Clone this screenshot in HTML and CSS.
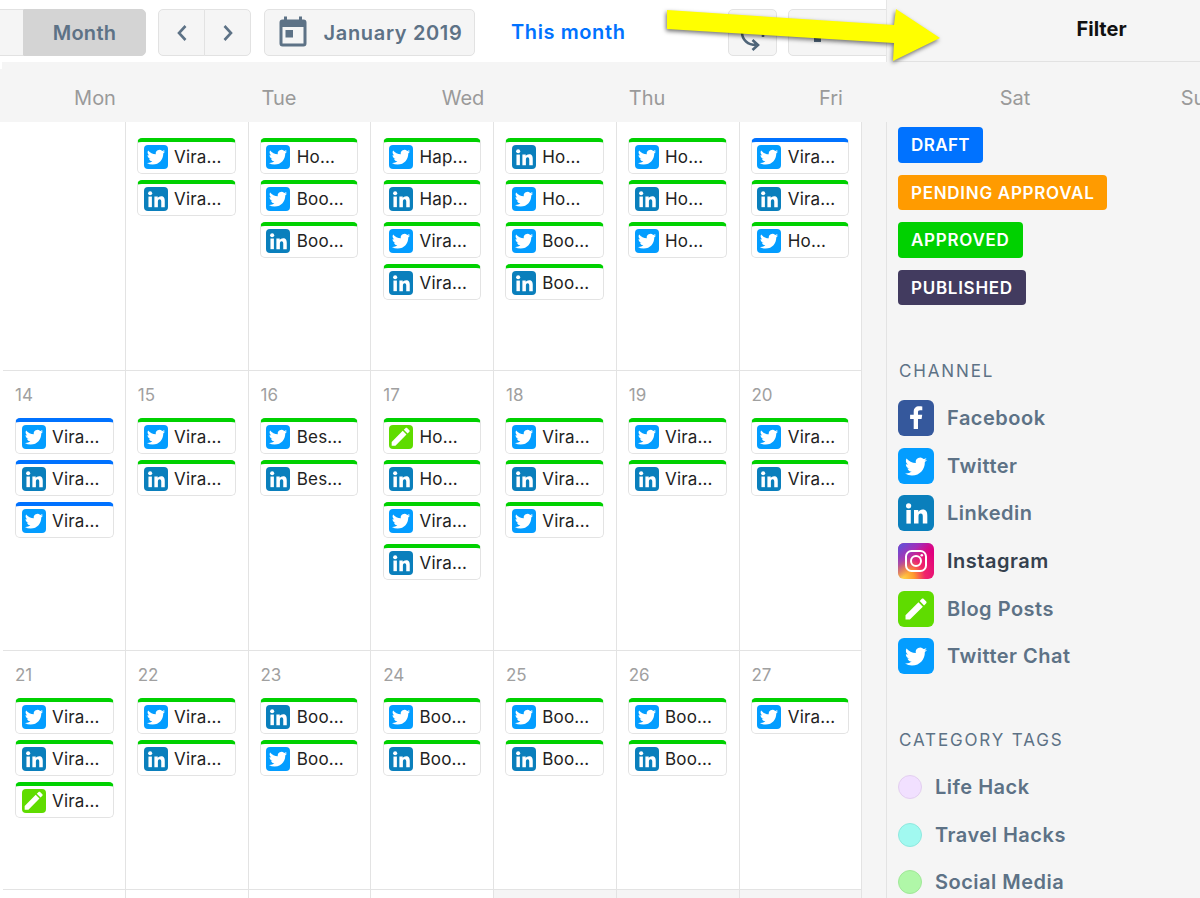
FILE: index.html
```html
<!DOCTYPE html>
<html lang="en">
<head>
<meta charset="utf-8">
<title>Calendar</title>
<link rel="stylesheet" href="styles.css">
</head>
<body>
<svg class="defs" width="0" height="0" aria-hidden="true">
  <defs>
    <radialGradient id="igwarm" cx="0.12" cy="1" r="1.1">
      <stop offset="0" stop-color="#ffd84a"/>
      <stop offset="0.3" stop-color="#ff9a2e"/>
      <stop offset="0.58" stop-color="#f0246a"/>
      <stop offset="1" stop-color="#e0007f"/>
    </radialGradient>
    <linearGradient id="igcool" x1="0" y1="0" x2="0.55" y2="0.6">
      <stop offset="0" stop-color="#4f5be0"/>
      <stop offset="0.55" stop-color="#8a3cd0" stop-opacity="0.7"/>
      <stop offset="1" stop-color="#c0209a" stop-opacity="0"/>
    </linearGradient>
    <path id="bird" fill="#fff" d="M23.953 4.57a10 10 0 01-2.825.775 4.958 4.958 0 002.163-2.723c-.951.555-2.005.959-3.127 1.184a4.92 4.92 0 00-8.384 4.482C7.69 8.095 4.067 6.13 1.64 3.162a4.822 4.822 0 00-.666 2.475c0 1.71.87 3.213 2.188 4.096a4.904 4.904 0 01-2.228-.616v.06a4.923 4.923 0 003.946 4.827 4.996 4.996 0 01-2.212.085 4.936 4.936 0 004.604 3.417 9.867 9.867 0 01-6.102 2.105c-.39 0-.779-.023-1.17-.067a13.995 13.995 0 007.557 2.209c9.053 0 13.998-7.496 13.998-13.985 0-.21 0-.42-.015-.63A9.935 9.935 0 0024 4.59z"/>
    <g id="inmark" fill="#fff">
      <circle cx="10.600" cy="10.800" r="2.600"/>
      <rect x="8.400" y="15" width="4.400" height="13.600"/>
      <path d="M16 15h4.300v2c.8-1.400 2.400-2.400 4.300-2.400 3.700 0 4.700 2.400 4.700 5.800v8.200h-4.500v-7.200c0-1.800-.5-3-2.100-3-1.700 0-2.200 1.300-2.200 3v7.200H16z"/>
    </g>
    <path id="pencil" fill="#fff" d="M3 17.250V21h3.750L17.810 9.940l-3.750-3.750L3 17.250zM20.710 7.040c.39-.39.39-1.020 0-1.410l-2.340-2.340c-.39-.39-1.020-.39-1.410 0l-1.830 1.830 3.750 3.750 1.830-1.830z"/>
    <symbol id="tw" viewBox="0 0 36 36">
      <rect width="36" height="36" rx="6" fill="#039dff"/>
      <use href="#bird" transform="translate(4.300 4.600) scale(1.140)"/>
    </symbol>
    <symbol id="tw-lg" viewBox="0 0 36 36">
      <rect width="36" height="36" rx="6" fill="#039dff"/>
      <use href="#bird" transform="translate(7 7.500) scale(.92)"/>
    </symbol>
    <symbol id="li" viewBox="0 0 36 36">
      <rect width="36" height="36" rx="6" fill="#0a7fbc"/>
      <use href="#inmark" transform="translate(18.500 19) scale(1.170) translate(-18.500 -19)"/>
    </symbol>
    <symbol id="li-lg" viewBox="0 0 36 36">
      <rect width="36" height="36" rx="6" fill="#0a7fbc"/>
      <use href="#inmark"/>
    </symbol>
    <symbol id="fb" viewBox="0 0 36 36">
      <rect width="36" height="36" rx="6" fill="#35589c"/>
      <path fill="#fff" d="M20 29V19h3.600l.6-4.200H20v-2.500c0-1.200.4-2 2.100-2h2.200V6.500c-.4-.1-1.700-.2-3.200-.2-3.200 0-5.400 1.900-5.400 5.500v3h-3.600V19h3.600v10z"/>
    </symbol>
    <symbol id="ig" viewBox="0 0 36 36">
      <rect width="36" height="36" rx="6" fill="url(#igwarm)"/>
      <rect width="36" height="36" rx="6" fill="url(#igcool)"/>
      <rect x="8" y="8" width="20" height="20" rx="5.500" fill="none" stroke="#fff" stroke-width="2"/>
      <circle cx="18" cy="18" r="5" fill="none" stroke="#fff" stroke-width="2"/>
      <circle cx="23.800" cy="12.200" r="1.300" fill="#fff"/>
    </symbol>
    <symbol id="pen" viewBox="0 0 36 36">
      <rect width="36" height="36" rx="6" fill="#5fdc00"/>
      <use href="#pencil" transform="translate(-.500 -.500) scale(1.500)"/>
    </symbol>
    <symbol id="pen-lg" viewBox="0 0 36 36">
      <rect width="36" height="36" rx="6" fill="#5fdc00"/>
      <use href="#pencil" transform="translate(4 4) scale(1.170)"/>
    </symbol>
  </defs>
</svg>

<div class="page">
  <header class="top">
    <div class="toolbar">
      <div class="btn-group views">
        <span class="btn seg-light"></span>
        <span class="btn seg-active">Month</span>
      </div>
      <div class="btn-group nav">
        <span class="btn nav-btn">
          <svg class="chev" viewBox="0 0 12 20"><path d="M9.500 3L3 10l6.500 7"/></svg>
        </span>
        <span class="btn nav-btn">
          <svg class="chev" viewBox="0 0 12 20"><path d="M2.500 3L9 10l-6.500 7"/></svg>
        </span>
      </div>
      <span class="btn date-btn">
        <svg class="cal" viewBox="0 0 24 24"><path d="M19 3h-1V1h-2v2H8V1H6v2H5a2 2 0 00-2 2v14a2 2 0 002 2h14a2 2 0 002-2V5a2 2 0 00-2-2zm0 16H5V8h14zM7 10h5v5H7z"/></svg>
        January 2019
      </span>
      <a class="this-month">This month</a>
      <span class="btn refresh-btn">
        <svg class="refresh" viewBox="0 0 30 30"><path d="M4 8C4 16 10 21 18 21M14.500 16l5.500 5-5.500 5M25 10v3"/></svg>
      </span>
      <span class="btn more-btn"><i class="more-dot"></i></span>
    </div>
    <div class="filter-head"><div class="filter-title">Filter</div></div>
  </header>

  <div class="dayhead">
    <span>Mon</span><span>Tue</span><span>Wed</span><span>Thu</span><span>Fri</span><span>Sat</span><span>Sun</span>
  </div>

  <div class="body">
    <main class="calendar">
      <div class="grid">
        <div class="cell r1"></div>
        <div class="cell r1">
          <div class="post"><svg class="ic"><use href="#tw"/></svg><span>Vira...</span></div>
          <div class="post"><svg class="ic"><use href="#li"/></svg><span>Vira...</span></div>
        </div>
        <div class="cell r1">
          <div class="post"><svg class="ic"><use href="#tw"/></svg><span>Ho...</span></div>
          <div class="post"><svg class="ic"><use href="#tw"/></svg><span>Boo...</span></div>
          <div class="post"><svg class="ic"><use href="#li"/></svg><span>Boo...</span></div>
        </div>
        <div class="cell r1">
          <div class="post"><svg class="ic"><use href="#tw"/></svg><span>Hap...</span></div>
          <div class="post"><svg class="ic"><use href="#li"/></svg><span>Hap...</span></div>
          <div class="post"><svg class="ic"><use href="#tw"/></svg><span>Vira...</span></div>
          <div class="post"><svg class="ic"><use href="#li"/></svg><span>Vira...</span></div>
        </div>
        <div class="cell r1">
          <div class="post"><svg class="ic"><use href="#li"/></svg><span>Ho...</span></div>
          <div class="post"><svg class="ic"><use href="#tw"/></svg><span>Ho...</span></div>
          <div class="post"><svg class="ic"><use href="#tw"/></svg><span>Boo...</span></div>
          <div class="post"><svg class="ic"><use href="#li"/></svg><span>Boo...</span></div>
        </div>
        <div class="cell r1">
          <div class="post"><svg class="ic"><use href="#tw"/></svg><span>Ho...</span></div>
          <div class="post"><svg class="ic"><use href="#li"/></svg><span>Ho...</span></div>
          <div class="post"><svg class="ic"><use href="#tw"/></svg><span>Ho...</span></div>
        </div>
        <div class="cell r1">
          <div class="post draft"><svg class="ic"><use href="#tw"/></svg><span>Vira...</span></div>
          <div class="post"><svg class="ic"><use href="#li"/></svg><span>Vira...</span></div>
          <div class="post"><svg class="ic"><use href="#tw"/></svg><span>Ho...</span></div>
        </div>

        <div class="cell r2"><div class="date">14</div>
          <div class="post draft"><svg class="ic"><use href="#tw"/></svg><span>Vira...</span></div>
          <div class="post draft"><svg class="ic"><use href="#li"/></svg><span>Vira...</span></div>
          <div class="post draft"><svg class="ic"><use href="#tw"/></svg><span>Vira...</span></div>
        </div>
        <div class="cell r2"><div class="date">15</div>
          <div class="post"><svg class="ic"><use href="#tw"/></svg><span>Vira...</span></div>
          <div class="post"><svg class="ic"><use href="#li"/></svg><span>Vira...</span></div>
        </div>
        <div class="cell r2"><div class="date">16</div>
          <div class="post"><svg class="ic"><use href="#tw"/></svg><span>Bes...</span></div>
          <div class="post"><svg class="ic"><use href="#li"/></svg><span>Bes...</span></div>
        </div>
        <div class="cell r2"><div class="date">17</div>
          <div class="post"><svg class="ic"><use href="#pen"/></svg><span>Ho...</span></div>
          <div class="post"><svg class="ic"><use href="#li"/></svg><span>Ho...</span></div>
          <div class="post"><svg class="ic"><use href="#tw"/></svg><span>Vira...</span></div>
          <div class="post"><svg class="ic"><use href="#li"/></svg><span>Vira...</span></div>
        </div>
        <div class="cell r2"><div class="date">18</div>
          <div class="post"><svg class="ic"><use href="#tw"/></svg><span>Vira...</span></div>
          <div class="post"><svg class="ic"><use href="#li"/></svg><span>Vira...</span></div>
          <div class="post"><svg class="ic"><use href="#tw"/></svg><span>Vira...</span></div>
        </div>
        <div class="cell r2"><div class="date">19</div>
          <div class="post"><svg class="ic"><use href="#tw"/></svg><span>Vira...</span></div>
          <div class="post"><svg class="ic"><use href="#li"/></svg><span>Vira...</span></div>
        </div>
        <div class="cell r2"><div class="date">20</div>
          <div class="post"><svg class="ic"><use href="#tw"/></svg><span>Vira...</span></div>
          <div class="post"><svg class="ic"><use href="#li"/></svg><span>Vira...</span></div>
        </div>

        <div class="cell r3"><div class="date">21</div>
          <div class="post"><svg class="ic"><use href="#tw"/></svg><span>Vira...</span></div>
          <div class="post"><svg class="ic"><use href="#li"/></svg><span>Vira...</span></div>
          <div class="post"><svg class="ic"><use href="#pen"/></svg><span>Vira...</span></div>
        </div>
        <div class="cell r3"><div class="date">22</div>
          <div class="post"><svg class="ic"><use href="#tw"/></svg><span>Vira...</span></div>
          <div class="post"><svg class="ic"><use href="#li"/></svg><span>Vira...</span></div>
        </div>
        <div class="cell r3"><div class="date">23</div>
          <div class="post"><svg class="ic"><use href="#li"/></svg><span>Boo...</span></div>
          <div class="post"><svg class="ic"><use href="#tw"/></svg><span>Boo...</span></div>
        </div>
        <div class="cell r3"><div class="date">24</div>
          <div class="post"><svg class="ic"><use href="#tw"/></svg><span>Boo...</span></div>
          <div class="post"><svg class="ic"><use href="#li"/></svg><span>Boo...</span></div>
        </div>
        <div class="cell r3"><div class="date">25</div>
          <div class="post"><svg class="ic"><use href="#tw"/></svg><span>Boo...</span></div>
          <div class="post"><svg class="ic"><use href="#li"/></svg><span>Boo...</span></div>
        </div>
        <div class="cell r3"><div class="date">26</div>
          <div class="post"><svg class="ic"><use href="#tw"/></svg><span>Boo...</span></div>
          <div class="post"><svg class="ic"><use href="#li"/></svg><span>Boo...</span></div>
        </div>
        <div class="cell r3"><div class="date">27</div>
          <div class="post"><svg class="ic"><use href="#tw"/></svg><span>Vira...</span></div>
        </div>

        <div class="cell r4"></div>
        <div class="cell r4"></div>
        <div class="cell r4"></div>
        <div class="cell r4"></div>
        <div class="cell r4 off"></div>
        <div class="cell r4 off"></div>
        <div class="cell r4 off"></div>
      </div>
    </main>

    <aside class="panel">
      <div class="badges">
        <span class="badge b-draft">DRAFT</span>
        <span class="badge b-pending">PENDING APPROVAL</span>
        <span class="badge b-approved">APPROVED</span>
        <span class="badge b-published">PUBLISHED</span>
      </div>
      <h2 class="label channel-label">CHANNEL</h2>
      <ul class="channels">
        <li><svg class="ic-lg"><use href="#fb"/></svg>Facebook</li>
        <li><svg class="ic-lg"><use href="#tw-lg"/></svg>Twitter</li>
        <li><svg class="ic-lg"><use href="#li-lg"/></svg>Linkedin</li>
        <li class="hover"><svg class="ic-lg"><use href="#ig"/></svg>Instagram</li>
        <li><svg class="ic-lg"><use href="#pen-lg"/></svg>Blog Posts</li>
        <li><svg class="ic-lg"><use href="#tw-lg"/></svg>Twitter Chat</li>
      </ul>
      <h2 class="label tags-label">CATEGORY TAGS</h2>
      <ul class="tags">
        <li><i class="dot d-life"></i>Life Hack</li>
        <li><i class="dot d-travel"></i>Travel Hacks</li>
        <li><i class="dot d-social"></i>Social Media</li>
      </ul>
    </aside>
  </div>

  <svg class="arrow" viewBox="0 0 290 60" width="290" height="60" aria-hidden="true">
    <polygon points="2,1 229,16 231,0 275,29 228,52 229,34 2,20" fill="#ffff00"/>
  </svg>
</div>
</body>
</html>
```
FILE: styles.css
```css
* { box-sizing: border-box; }
html, body { margin: 0; padding: 0; height: 100%; }
body {
  font-family: "Inter", "Liberation Sans", sans-serif;
  background: #fff;
  overflow: hidden;
}
.defs { position: absolute; }
.page {
  position: relative;
  width: 1200px;
  height: 898px;
  overflow: hidden;
  display: flex;
  flex-direction: column;
}

/* top row */
.top { display: flex; height: 62px; flex: none; }
.toolbar {
  width: 886px;
  flex: none;
  display: flex;
  align-items: flex-start;
  padding-top: 9px;
  overflow: hidden;
  background: #fff;
}
.btn {
  display: flex;
  align-items: center;
  justify-content: center;
  height: 47px;
  flex: none;
  background: #f5f5f5;
  border: 1px solid #e2e2e2;
  border-radius: 5px;
  color: #5d7286;
  font-size: 20px;
  font-weight: 600;
  letter-spacing: .3px;
}
.btn-group { display: flex; flex: none; }
.views { margin-left: -40px; }
.seg-light { width: 63px; border-radius: 5px 0 0 5px; border-right: 0; }
.seg-active {
  width: 123px;
  background: #d4d4d4;
  border-radius: 0 5px 5px 0;
  border-color: #d4d4d4;
}
.nav { margin-left: 12px; }
.nav-btn { width: 47px; border-radius: 5px 0 0 5px; }
.nav-btn + .nav-btn { margin-left: -1px; border-radius: 0 5px 5px 0; }
.chev { width: 12px; height: 20px; fill: none; stroke: #5d7286; stroke-width: 2.6; }
.date-btn { width: 211px; margin-left: 13px; gap: 13px; letter-spacing: .65px; }
.cal { width: 36px; height: 36px; fill: #5d7286; margin-left: -2px; }
.this-month {
  margin-left: 36px;
  line-height: 47px;
  color: #0072ff;
  font-size: 20px;
  font-weight: 600;
  letter-spacing: .6px;
  flex: none;
  width: 217px;
}
.refresh-btn { width: 49px; }
.refresh { width: 30px; height: 30px; fill: none; stroke: #4f6579; stroke-width: 2.6; margin-top: 13px; }
.more-btn { width: 140px; margin-left: 11px; justify-content: flex-start; padding-left: 25px; }
.more-dot { display: block; width: 7px; height: 5px; background: #4f6579; margin-top: 13px; }

.filter-head {
  flex: 1;
  background: #f5f5f5;
  border-left: 1px solid #e6e6e6;
}
.filter-title {
  height: 62px;
  margin-left: 6px;
  padding-left: 110px;
  display: flex;
  align-items: center;
  justify-content: center;
  border-bottom: 1px solid #e2e2e2;
  color: #111;
  font-size: 20px;
  font-weight: 700;
  padding-bottom: 4px;
}

/* weekday header */
.dayhead {
  flex: none;
  height: 60px;
  background: linear-gradient(#fff, #fff) 0 0 / 2px 7px no-repeat, #f5f5f5;
  display: grid;
  grid-template-columns: repeat(7, 184px);
  padding: 11px 0 0 3px;
  align-items: center;
  color: #9a9a9a;
  font-size: 20px;
  text-align: center;
  overflow: hidden;
}

/* calendar */
.body { flex: 1; display: flex; min-height: 0; }
.calendar { width: 886px; flex: none; background: #f5f5f5; overflow: hidden; }
.grid {
  width: 862px;
  border-left: 3px solid #fff;
  box-shadow: inset 1px 0 0 #e4e4e4;
  display: grid;
  grid-template-columns: repeat(7, 122.75px);
  grid-template-rows: 249px 280px 239px 40px;
}
.cell {
  background: #fff;
  border-right: 1px solid #e3e3e3;
  border-bottom: 1px solid #e3e3e3;
  padding-left: 11.3px;
}
.cell:nth-child(7n+1) { padding-left: 12px; }
.r1 { padding-top: 16px; }
.off { background: #f5f5f5; }
.date {
  height: 47px;
  padding-top: 12px;
  padding-left: .7px;
  line-height: 24px;
  font-size: 17px;
  color: #a0a0a0;
}
.cell:nth-child(7n+1) .date { padding-left: 0; }
.post {
  width: 98.500px;
  height: 36px;
  margin-bottom: 6px;
  display: flex;
  align-items: center;
  gap: 6.500px;
  padding: 0 0 2px 5.500px;
  background: #fff;
  border: 1px solid #e3e3e3;
  border-top: 4px solid #00d100;
  border-radius: 5px;
  color: #222;
  font-size: 17px;
  letter-spacing: .15px;
  white-space: nowrap;
  overflow: hidden;
}
.post.draft { border-top-color: #0072ff; }
.ic { width: 24px; height: 24px; flex: none; }

/* side panel */
.panel {
  flex: 1;
  background: #f5f5f5;
  border-left: 1px solid #e3e3e3;
  padding-left: 11px;
  color: #5d7286;
}
.badges {
  display: flex;
  flex-direction: column;
  align-items: flex-start;
  gap: 12px;
  padding-top: 5px;
}
.badge {
  display: block;
  height: 35.500px;
  line-height: 37px;
  padding: 0 13px;
  border-radius: 4px;
  color: #fff;
  font-size: 17px;
  font-weight: 600;
  letter-spacing: .72px;
}
.b-draft { background: #0072ff; letter-spacing: .4px; }
.b-pending { background: #ff9b00; }
.b-approved { background: #00d100; }
.b-published { background: #423b5f; }
.label {
  margin: 0 0 0 1px;
  font-size: 17px;
  font-weight: 400;
  letter-spacing: 1.850px;
  line-height: 24px;
  color: #5d7286;
}
.channel-label { margin-top: 54px; }
ul { list-style: none; margin: 0; padding: 0; }
.channels { margin-top: 17px; display: flex; flex-direction: column; gap: 11.700px; }
.channels li, .tags li {
  display: flex;
  align-items: center;
  font-size: 20px;
  font-weight: 600;
  letter-spacing: .5px;
  white-space: nowrap;
}
.channels li { height: 36px; gap: 13px; }
.channels .hover { color: #35414e; }
.ic-lg { width: 36px; height: 36px; flex: none; }
.tags-label { margin-top: 53.500px; }
.tags { margin-top: 23px; display: flex; flex-direction: column; gap: 23.700px; }
.tags li { height: 24px; gap: 13px; }
.dot { width: 24px; height: 24px; border-radius: 50%; flex: none; border: 1px solid; }
.d-life { background: #f1e0ff; border-color: #e3cff0; }
.d-travel { background: #a1f9f0; border-color: #8fe8df; }
.d-social { background: #b0f7a8; border-color: #a0e898; }

/* annotation */
.arrow {
  position: absolute;
  left: 665px;
  top: 9px;
  overflow: visible;
  filter: drop-shadow(-1px 2px 2px rgba(0, 0, 0, .55));
}
```
